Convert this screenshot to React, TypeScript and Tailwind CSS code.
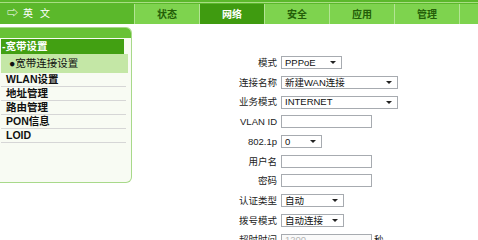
const tabs = ["状态", "网络", "安全", "应用", "管理", ""];

const menu = ["WLAN设置", "地址管理", "路由管理", "PON信息", "LOID"];

type Row =
  | { label: string; kind: "select"; value: string; width: string }
  | { label: string; kind: "input"; value?: string; disabled?: boolean; suffix?: string };

const rows: Row[] = [
  { label: "模式", kind: "select", value: "PPPoE", width: "w-[61px]" },
  { label: "连接名称", kind: "select", value: "新建WAN连接", width: "w-[117px]" },
  { label: "业务模式", kind: "select", value: "INTERNET", width: "w-[117px]" },
  { label: "VLAN ID", kind: "input" },
  { label: "802.1p", kind: "select", value: "0", width: "w-[41px]" },
  { label: "用户名", kind: "input" },
  { label: "密码", kind: "input" },
  { label: "认证类型", kind: "select", value: "自动", width: "w-[63px]" },
  { label: "拨号模式", kind: "select", value: "自动连接", width: "w-[63px]" },
  { label: "超时时间", kind: "input", value: "1200", disabled: true, suffix: "秒" },
];

function SelectBox({ value, width }: { value: string; width: string }) {
  return (
    <div
      className={`${width} h-[13px] border border-[#a7abb0] bg-white flex items-center justify-between pl-[3px] pr-[5px]`}
    >
      <span className="text-[9.5px] leading-none text-[#111]">{value}</span>
      {/* down arrow */}
      <span className="w-0 h-0 border-l-[3px] border-r-[3px] border-t-[3px] border-l-transparent border-r-transparent border-t-[#222]" />
    </div>
  );
}

function TextBox({ value, disabled }: { value?: string; disabled?: boolean }) {
  return (
    <div
      className={`w-[91px] h-[13px] border border-[#a7abb0] flex items-center px-[3px] ${
        disabled ? "bg-[#fafafa]" : "bg-white"
      }`}
    >
      <span className="text-[9.5px] leading-none text-[#b5b5b5]">{value}</span>
    </div>
  );
}

export default function App() {
  return (
    <div
      className="w-[478px] h-[240px] overflow-hidden bg-white"
      style={{ fontFamily: '"Liberation Sans", "Noto Sans CJK SC", sans-serif' }}
    >
      {/* Top bar */}
      <div className="h-[24px] bg-[#5bb82b] pt-[2px] overflow-hidden">
        <div className="h-[22px] border-t border-[#a8dd83] flex">
          <div className="w-[134px] shrink-0 flex items-center pl-[7px] gap-[5px] text-white text-[10px]">
            <span className="text-[11px] leading-none">⇨</span>
            <span className="tracking-[7px]">英文</span>
          </div>
          <div className="flex shrink-0 pt-[1px]">
            {tabs.map((t, i) => (
              <div
                key={i}
                className={`w-[65px] shrink-0 h-[20px] border-l border-[#b3e494] flex items-center justify-center text-[10px] font-bold ${
                  t === "网络" ? "bg-[#3f9b10] text-white" : "bg-[#7ed34e] text-[#245f08]"
                }`}
              >
                {t}
              </div>
            ))}
          </div>
        </div>
      </div>

      <div className="flex">
        {/* Sidebar */}
        <div className="w-[132px] h-[156px] mt-[3px] border border-l-0 border-[#a8d98a] rounded-r-[6px] bg-[#f8fbf3] overflow-hidden">
          <div className="h-[10px] bg-[#68c236]" />
          <div className="pl-[1px] pr-[3px] pt-[1px]">
            <div className="w-[123px] h-[15px] bg-[#42a012] text-white font-bold text-[10.5px] flex items-center pl-[1px]">
              -宽带设置
            </div>
            <div className="h-[19px] bg-[#c4e7a6] text-[10.5px] text-[#111] flex items-center pl-[8px]">
              ●宽带连接设置
            </div>
            {menu.map((m) => (
              <div
                key={m}
                className="h-[14px] mr-[2px] border-b border-[#d6d6d6] font-bold text-[10.5px] text-[#111] flex items-center pl-[5px]"
              >
                {m}
              </div>
            ))}
          </div>
        </div>

        {/* Form */}
        <div className="flex-1 pt-[29px]">
          {rows.map((r) => (
            <div key={r.label} className="h-[19.7px] flex items-center">
              <div className="w-[145px] text-right text-[9.5px] text-[#222] leading-none">
                {r.label}
              </div>
              <div className="ml-[4px] flex items-center">
                {r.kind === "select" ? (
                  <SelectBox value={r.value} width={r.width} />
                ) : (
                  <TextBox value={r.value} disabled={r.disabled} />
                )}
                {r.kind === "input" && r.suffix && (
                  <span className="ml-[2px] text-[9.5px] text-[#222]">{r.suffix}</span>
                )}
              </div>
            </div>
          ))}
        </div>
      </div>
    </div>
  );
}
